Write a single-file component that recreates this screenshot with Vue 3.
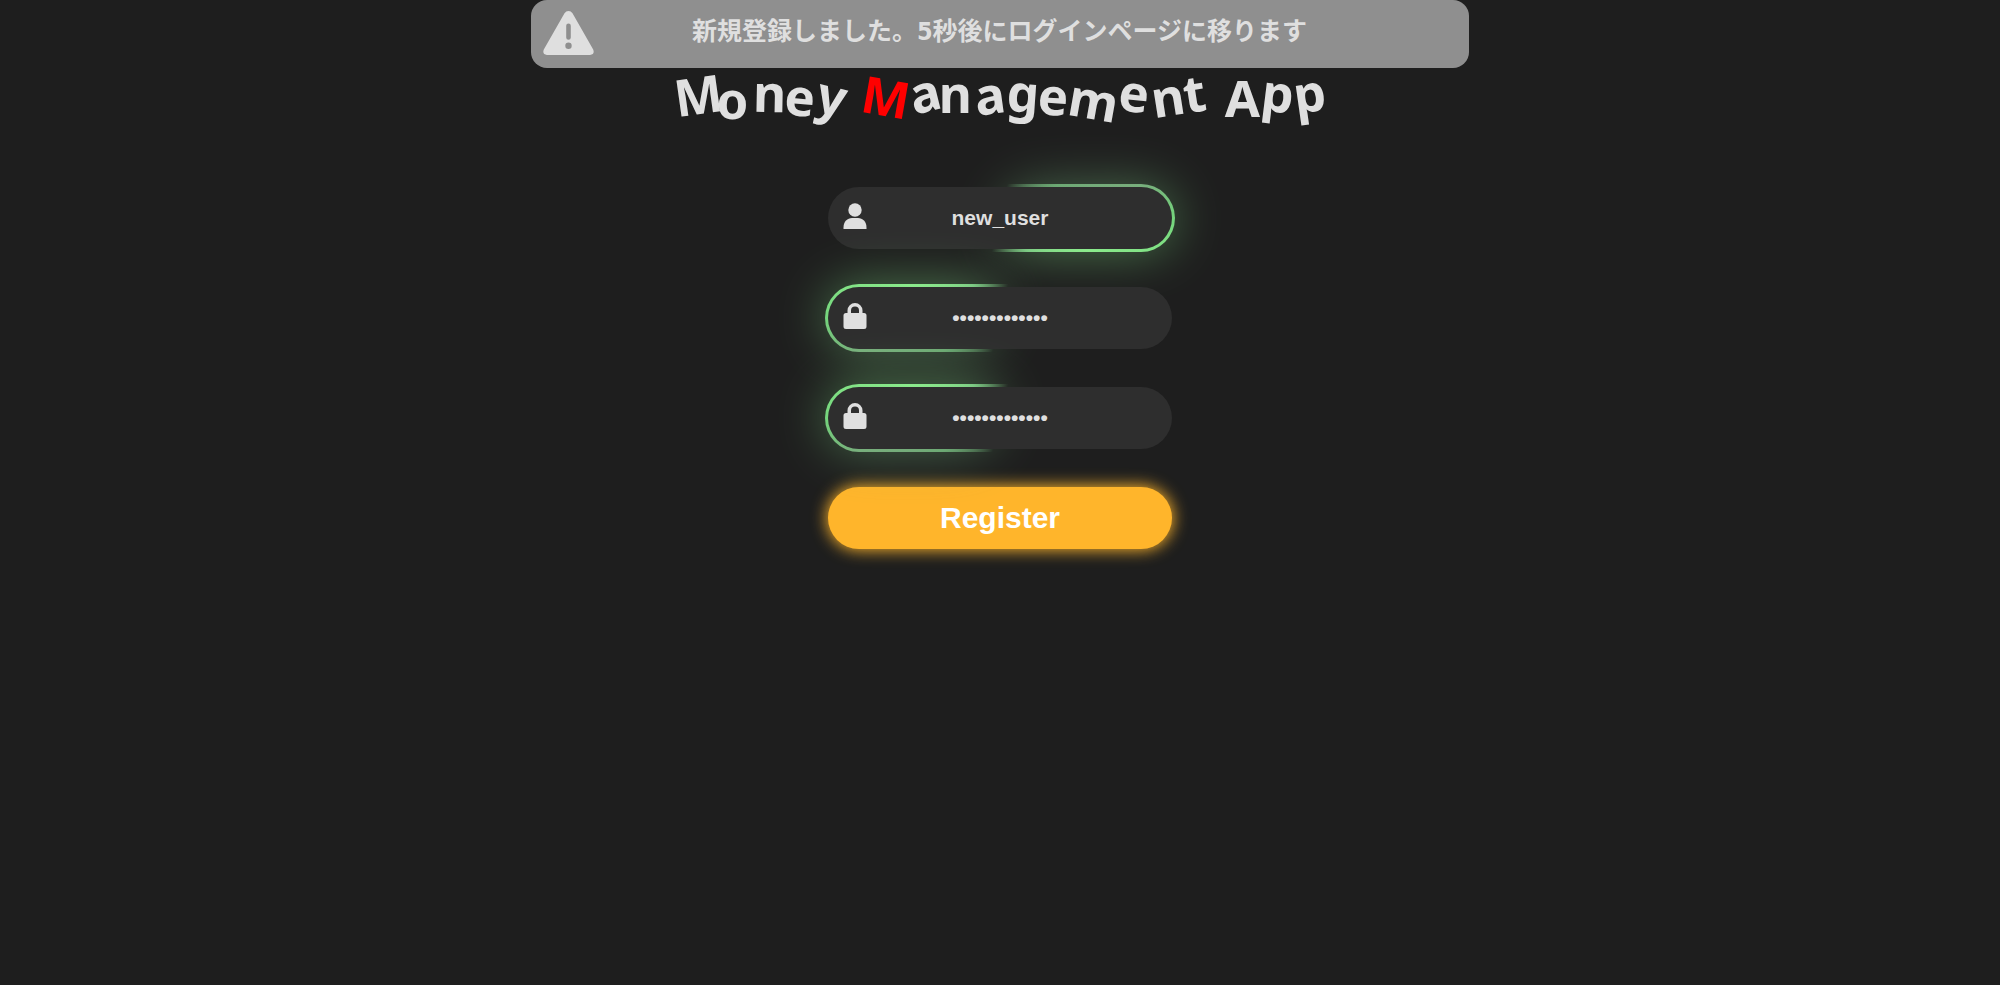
<script setup>
import { ref } from 'vue'

const letter = (char, turn, dx, dy, accent = false) => ({ char, turn, dx, dy, accent })

const words = [
  [
    letter('M', -8, 1, 0),
    letter('o', 0, -5, 5),
    letter('n', 1, 0, -2),
    letter('e', 5, -2, 2),
    letter('y', 13, 1, 1),
  ],
  [
    letter('M', 10, -4, 2, true),
    letter('a', -14, -5, -2),
    letter('n', 0, -6, -1),
    letter('a', -8, -4, 0),
    letter('g', 4, -2, -2),
    letter('e', 4, -3, 1),
    letter('m', 10, -2, 5),
    letter('e', 6, -2, -2),
    letter('n', -9, 0, 2),
    letter('t', -9, -2, -2),
  ],
  [
    letter('A', 0, -2, 3),
    letter('p', 7, 0, -2),
    letter('p', -8, -1, -2),
  ],
]

const title = words.map((w) => w.map((l) => l.char).join('')).join(' ')

const fields = ref([
  { id: 'username', label: 'User name', type: 'text', icon: 'user', glow: 'right', value: 'new_user' },
  { id: 'password', label: 'Password', type: 'password', icon: 'lock', glow: 'left', value: 'new_user_pass' },
  { id: 'confirm', label: 'Confirm password', type: 'password', icon: 'lock', glow: 'left', value: 'new_user_pass' },
])

const place = (l) => ({ transform: `translate(${l.dx}px, ${l.dy}px) rotate(${l.turn}deg)` })
</script>

<template>
  <div class="page">
    <div class="notice" role="status">
      <svg class="notice-icon" viewBox="0 0 51 44" aria-hidden="true">
        <path
          fill-rule="evenodd"
          d="M21.500 2.300Q23 0 25.500 0Q28 0 29.500 2.300L50.200 38.500Q52 43.500 47 44H4Q-1 43.500 .8 38.500ZM25.500 12.500Q23.200 12.500 23.200 14.800V26.500Q23.200 28.800 25.500 28.800Q27.800 28.800 27.800 26.500V14.800Q27.800 12.500 25.500 12.500ZM25.500 31.500A3.200 3.200 0 1 0 25.500 37.900A3.200 3.200 0 1 0 25.500 31.500Z"
        />
      </svg>
      <p class="notice-text">新規登録しました。5秒後にログインページに移ります</p>
    </div>

    <main class="content">
      <h1 class="title" :aria-label="title">
        <span v-for="(word, w) in words" :key="w" class="word" aria-hidden="true">
          <span
            v-for="(l, i) in word"
            :key="i"
            class="letter"
            :class="{ accent: l.accent }"
            :style="place(l)"
          >{{ l.char }}</span>
        </span>
      </h1>

      <form class="form" @submit.prevent>
        <div v-for="field in fields" :key="field.id" class="field" :class="field.glow">
          <label class="field-icon" :for="field.id" :aria-label="field.label">
            <svg v-if="field.icon === 'user'" viewBox="0 0 24 26" aria-hidden="true">
              <circle cx="12" cy="7" r="6.700" />
              <path d="M.5 26V24.500C.5 18.500 4.500 15 9 15H15C19.500 15 23.500 18.500 23.500 24.500V26Z" />
            </svg>
            <svg v-else viewBox="0 0 24 26" aria-hidden="true">
              <path
                fill-rule="evenodd"
                d="M4.500 10V7.500A7.500 7.500 0 0 1 19.500 7.500V10H21A2.500 2.500 0 0 1 23.500 12.500V23.500A2.500 2.500 0 0 1 21 26H3A2.500 2.500 0 0 1 .5 23.500V12.500A2.500 2.500 0 0 1 3 10ZM8 10H16V7.500A4 4 0 0 0 8 7.500Z"
              />
            </svg>
          </label>
          <input :id="field.id" v-model="field.value" class="input" :type="field.type" autocomplete="off" />
        </div>
        <button class="submit" type="submit">Register</button>
      </form>
    </main>
  </div>
</template>

<style>
body {
  margin: 0;
  background: #1e1e1e;
}
</style>

<style scoped>
.page {
  min-height: 100vh;
  color: #dfdfdf;
  background: #1e1e1e;
  font-family: "Liberation Sans", Arial, "Noto Sans CJK JP", sans-serif;
}

.notice {
  position: absolute;
  z-index: 2;
  top: 0;
  left: 0;
  right: 0;
  display: flex;
  align-items: center;
  box-sizing: border-box;
  max-width: 938px;
  min-height: 68px;
  margin: 0 auto;
  padding: 0 12px 2px;
  border-radius: 16px;
  background: #8f8f8f;
}

.notice-icon {
  flex: none;
  width: 51px;
  height: 44px;
  fill: #dfdfdf;
}

.notice-text {
  flex: 1;
  margin: 0;
  padding: 0 52px 2px 0;
  text-align: center;
  font: bold 25px/36px "DejaVu Sans Condensed", "Noto Sans CJK JP", sans-serif;
}

.content {
  display: flex;
  flex-direction: column;
  align-items: center;
  gap: 56px;
  padding-top: 60px;
}

.title {
  display: flex;
  flex-wrap: wrap;
  justify-content: center;
  gap: 0 20px;
  margin: 0;
  font: bold 51px/68px "Noto Sans", sans-serif;
}

.word {
  display: flex;
}

.letter {
  display: inline-block;
}

.accent {
  color: #f00;
}

.form {
  display: flex;
  flex-direction: column;
  gap: 32px;
  width: 350px;
  max-width: 100%;
}

.field {
  position: relative;
  z-index: 0;
  display: flex;
  padding: 3px;
  border-radius: 34px;
}

.field::before,
.field::after {
  content: "";
  position: absolute;
  z-index: -1;
  inset: 0;
  border-radius: 34px;
  background: conic-gradient(
    transparent 12deg,
    #6aa572 60deg,
    #78a87c 76deg,
    #74d67c 90deg,
    #8eee8e 110deg,
    #7cc884 140deg,
    transparent 194deg
  );
}

.field::after {
  filter: blur(25px);
  opacity: 0.45;
}

.field.left::before,
.field.left::after {
  rotate: 180deg;
}

.field-icon {
  position: absolute;
  z-index: 1;
  top: 19px;
  left: 18px;
}

.field-icon svg {
  display: block;
  width: 24px;
  height: 26px;
  fill: #dfdfdf;
}

.input {
  box-sizing: border-box;
  width: 100%;
  height: 62px;
  padding: 0 60px;
  border: 0;
  border-radius: 31px;
  outline: 0;
  color: #dfdfdf;
  background: #2e2e2e;
  text-align: center;
  font: bold 21px/24px "Liberation Sans", Arial, sans-serif;
}

.submit {
  height: 62px;
  margin: 3px;
  padding: 0;
  border: 0;
  border-radius: 31px;
  color: #fff;
  background: #ffb52b;
  box-shadow: 0 0 16px 1px #ffb52b;
  font: bold 30px/36px "Liberation Sans", Arial, sans-serif;
  cursor: pointer;
}
</style>
